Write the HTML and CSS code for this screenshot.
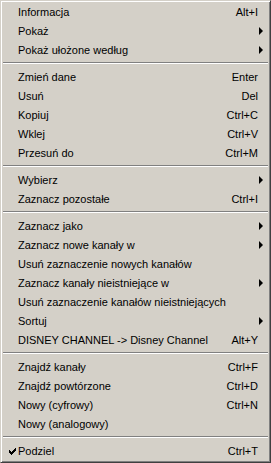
FILE: index.html
```html
<!DOCTYPE html>
<html lang="pl">
<head>
  <meta charset="UTF-8">
  <title>Menu kanałów</title>
  <link rel="stylesheet" href="styles.css">
</head>
<body>

  <div class="menu">
    <div class="item"><span class="label">Informacja</span><span class="key">Alt+I</span></div>
    <div class="item"><span class="label">Pokaż</span><span class="arrow"></span></div>
    <div class="item"><span class="label">Pokaż ułożone według</span><span class="arrow"></span></div>

    <div class="sep"></div>

    <div class="item"><span class="label">Zmień dane</span><span class="key">Enter</span></div>
    <div class="item"><span class="label">Usuń</span><span class="key">Del</span></div>
    <div class="item"><span class="label">Kopiuj</span><span class="key">Ctrl+C</span></div>
    <div class="item"><span class="label">Wklej</span><span class="key">Ctrl+V</span></div>
    <div class="item"><span class="label">Przesuń do</span><span class="key">Ctrl+M</span></div>

    <div class="sep"></div>

    <div class="item"><span class="label">Wybierz</span><span class="arrow"></span></div>
    <div class="item"><span class="label">Zaznacz pozostałe</span><span class="key">Ctrl+I</span></div>

    <div class="sep"></div>

    <div class="item"><span class="label">Zaznacz jako</span><span class="arrow"></span></div>
    <div class="item"><span class="label">Zaznacz nowe kanały w</span><span class="arrow"></span></div>
    <div class="item"><span class="label">Usuń zaznaczenie nowych kanałów</span></div>
    <div class="item"><span class="label">Zaznacz kanały nieistniejące w</span><span class="arrow"></span></div>
    <div class="item"><span class="label">Usuń zaznaczenie kanałów nieistniejących</span></div>
    <div class="item"><span class="label">Sortuj</span><span class="arrow"></span></div>
    <div class="item"><span class="label">DISNEY CHANNEL -&gt; Disney Channel</span><span class="key">Alt+Y</span></div>

    <div class="sep"></div>

    <div class="item"><span class="label">Znajdź kanały</span><span class="key">Ctrl+F</span></div>
    <div class="item"><span class="label">Znajdź powtórzone</span><span class="key">Ctrl+D</span></div>
    <div class="item"><span class="label">Nowy (cyfrowy)</span><span class="key">Ctrl+N</span></div>
    <div class="item"><span class="label">Nowy (analogowy)</span></div>

    <div class="sep"></div>

    <div class="item checked">
      <svg class="check" width="7" height="7" viewBox="0 0 7 7">
        <path d="M0 2h1v1h1v1h1v-1h1v-1h1v-1h1v-1h1v3h-1v1h-1v1h-1v1h-1v1h-1v-1h-1v-1h-1z" fill="#000"/>
      </svg>
      <span class="label">Podziel</span><span class="key">Ctrl+T</span>
    </div>
  </div>

</body>
</html>
```

FILE: styles.css
```css
body {
  margin: 0;
  padding: 0;
  background-color: #d4d0c8;
}

.menu {
  width: 271px;
  height: 463px;
  box-sizing: border-box;
  padding: 1px 1px 0 1px;
  background-color: #d4d0c8;
  border-top: 1px solid #d4d0c8;
  border-left: 1px solid #d4d0c8;
  border-right: 1px solid #404040;
  border-bottom: 1px solid #404040;
  box-shadow: inset 1px 1px 0 #ffffff, inset -1px -1px 0 #808080;
  font-family: "Liberation Sans", Arial, sans-serif;
  font-size: 11px;
  color: #000;
}

.item {
  position: relative;
  display: flex;
  align-items: center;
  height: 19px;
  padding: 0 6px 0 16px;
}

.label {
  flex: 1;
  white-space: nowrap;
}

.key {
  margin-right: 5px;
  white-space: nowrap;
}

.arrow {
  width: 0;
  height: 0;
  border-top: 4px solid transparent;
  border-bottom: 4px solid transparent;
  border-left: 4px solid #000;
}

/* check mark sits just before the label */
.check {
  position: absolute;
  left: 7px;
  top: 7px;
}

.sep {
  height: 8px;
  margin: 0 1px;
  display: flex;
  align-items: center;
}

.sep::before {
  content: "";
  flex: 1;
  height: 0;
  margin-top: -1px;
  border-top: 1px solid #808080;
  border-bottom: 1px solid #ffffff;
}
```
